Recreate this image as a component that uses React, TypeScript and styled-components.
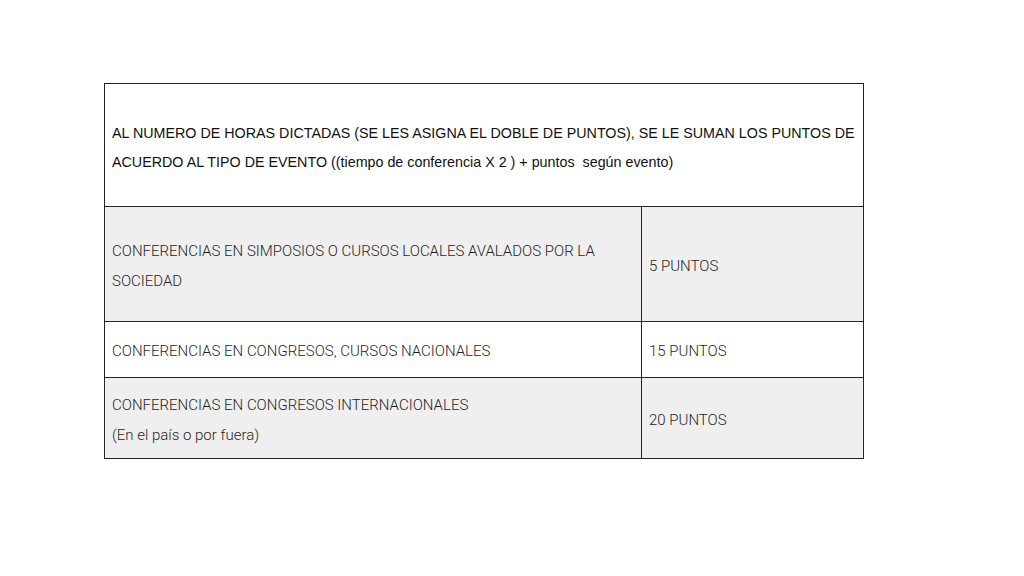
import React from "react";
import styled, { createGlobalStyle } from "styled-components";

const GlobalStyle = createGlobalStyle`
  html, body {
    margin: 0;
    padding: 0;
    background: #ffffff;
  }
`;

interface Row {
  concept: string[];
  points: string;
  shaded: boolean;
  height: number;
}

const rows: Row[] = [
  {
    concept: [
      "CONFERENCIAS EN SIMPOSIOS O CURSOS LOCALES AVALADOS POR LA",
      "SOCIEDAD",
    ],
    points: "5 PUNTOS",
    shaded: true,
    height: 115,
  },
  {
    concept: ["CONFERENCIAS EN CONGRESOS, CURSOS NACIONALES"],
    points: "15 PUNTOS",
    shaded: false,
    height: 56,
  },
  {
    concept: [
      "CONFERENCIAS EN CONGRESOS INTERNACIONALES",
      "(En el país o por fuera)",
    ],
    points: "20 PUNTOS",
    shaded: true,
    height: 81,
  },
];

const App: React.FC = () => {
  return (
    <Page>
      <GlobalStyle />
      <Table>
        <colgroup>
          <col style={{ width: 537 }} />
          <col style={{ width: 222 }} />
        </colgroup>
        <tbody>
          <tr>
            <HeaderCell colSpan={2}>
              <Line>
                AL NUMERO DE HORAS DICTADAS (SE LES ASIGNA EL DOBLE DE PUNTOS),
                SE LE SUMAN LOS PUNTOS DE
              </Line>
              <Line>
                ACUERDO AL TIPO DE EVENTO ((tiempo de conferencia X 2 ) +
                puntos&nbsp; según evento)
              </Line>
            </HeaderCell>
          </tr>
          {rows.map((row) => (
            <BodyRow key={row.points} $shaded={row.shaded} $height={row.height}>
              <Cell>
                {row.concept.map((line) => (
                  <Line key={line}>{line}</Line>
                ))}
              </Cell>
              <Cell>
                <Line>{row.points}</Line>
              </Cell>
            </BodyRow>
          ))}
        </tbody>
      </Table>
    </Page>
  );
};

export default App;

const Page = styled.div`
  width: 1024px;
  height: 576px;
  box-sizing: border-box;
  padding: 83px 0 0 104px;
  background: #ffffff;
`;

const Table = styled.table`
  width: 759px;
  border-collapse: collapse;
  table-layout: fixed;
`;

const HeaderCell = styled.td`
  height: 123px;
  box-sizing: border-box;
  padding: 5px 4px 0 7px;
  border: 1.5px solid #222222;
  background: #ffffff;
  font-family: "Liberation Sans", Arial, sans-serif;
  font-size: 14.3px;
  line-height: 29px;
  color: #111111;
  vertical-align: middle;
`;

const BodyRow = styled.tr<{ $shaded: boolean; $height: number }>`
  height: ${({ $height }) => $height}px;
  background: ${({ $shaded }) => ($shaded ? "#efefef" : "#ffffff")};
`;

const Cell = styled.td`
  box-sizing: border-box;
  padding: 3px 7px 0;
  border: 1.5px solid #222222;
  vertical-align: middle;
  font-family: Roboto, "Liberation Sans", sans-serif;
  font-weight: 300;
  font-size: 15px;
  line-height: 30px;
  color: #1f1f1f;
`;

const Line = styled.div`
  white-space: nowrap;
`;
